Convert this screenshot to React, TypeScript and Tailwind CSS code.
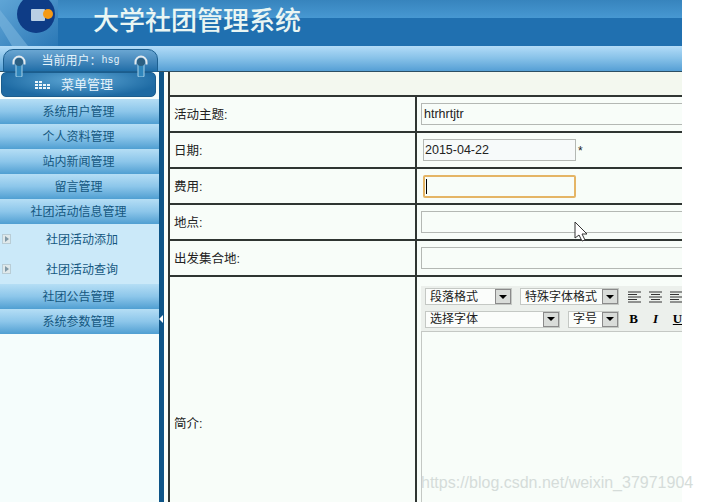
import { ReactNode } from "react";

const menu = ["系统用户管理", "个人资料管理", "站内新闻管理", "留言管理", "社团活动信息管理"];
const font = "font-['Liberation_Sans','Noto_Sans_CJK_SC',sans-serif]";

function MenuItem({ label }: { label: string }) {
  return <div className="h-[25px] flex items-center justify-center pr-[2px] pt-px text-xs text-[#14577f] bg-gradient-to-b from-[#b5def5] via-[#8cc6ea] to-[#4f9fd2]">{label}</div>;
}

function SubItem({ label }: { label: string }) {
  return (
    <div className="h-[30px] flex items-center bg-[#cbe9f9] text-xs text-[#14577f]">
      <div className="ml-[2px] w-[9px] h-[10px] bg-[#dfe8ea] border border-[#b9cdd6] flex items-center justify-center">
        <div className="w-0 h-0 border-y-[3px] border-y-transparent border-l-[4px] border-l-[#7f98a6]" />
      </div>
      <span className="ml-[35px] pt-[2px]">{label}</span>
    </div>
  );
}

function Row({ label, h, children }: { label: string; h: string; children?: ReactNode }) {
  return (
    <div className={`flex border-b-2 border-[#2f3532] ${h}`}>
      <div className="w-[247px] shrink-0 flex items-center pl-[4px] pt-[2px] text-[12.5px] text-[#222] border-r-2 border-[#2f3532]">{label}</div>
      <div className="flex-1 flex items-center pl-[4px] min-w-0">{children}</div>
    </div>
  );
}

function Select({ w, label, arrow }: { w: string; label: string; arrow: string }) {
  return (
    <div className={`${w} h-[17px] border border-[#c4c8c4] bg-[#fbfdfb] flex items-center pl-[4px] text-xs text-[#222] relative shrink-0`}>
      {label}
      <div className={`absolute top-0 ${arrow} w-[16px] h-[15px] bg-[#d9dcd9] border border-[#8a8a8a] flex items-center justify-center`}>
        <div className="w-0 h-0 border-x-[4px] border-x-transparent border-t-[4px] border-t-black" />
      </div>
    </div>
  );
}

function Lines({ center }: { center?: boolean }) {
  return (
    <svg width="15" height="13" viewBox="0 0 15 13" className="shrink-0" stroke="#333" strokeWidth="1">
      <path d={center ? "M1 2h13M3 4.500h9M1 7h13M3 9.500h9M1 12h13" : "M1 2h13M1 4.500h9M1 7h13M1 9.500h9M1 12h13"} />
    </svg>
  );
}

function Knob() {
  return (
    <svg width="14" height="22" viewBox="0 0 14 22">
      <path d="M4 9h6v12a1 1 0 0 1-1 1H5a1 1 0 0 1-1-1z" fill="#2f86bc" stroke="#a9d2e8" strokeWidth="1" />
      <circle cx="7" cy="7" r="4" fill="#2c5f82" />
      <path d="M1.500 9.500V7a5.500 5.500 0 0 1 11 0v2.500" fill="none" stroke="#e4eaee" strokeWidth="2" />
    </svg>
  );
}

export default function App() {
  return (
    <div className={`w-[701px] h-[502px] bg-white overflow-hidden relative ${font}`}>
      <div className="w-[682px] h-[502px] overflow-hidden relative">
        <header className="h-[46px] flex flex-col relative">
          <div className="h-[18px] bg-gradient-to-b from-[#3784bd] to-[#4798d2]" />
          <div className="h-[28px] bg-[#2070b0]" />
          <div className="absolute inset-0 flex items-start">
            <div className="w-[58px] h-[46px] relative overflow-hidden bg-gradient-to-br from-[#5fa5d6] to-[#2a78b6] shrink-0">
              <svg width="58" height="46" viewBox="0 0 58 46">
                <path d="M0 10L28 46H12L0 26z" fill="#7cb5dd" opacity="0.6" />
                <circle cx="36" cy="14" r="19" fill="#0e3c86" />
                <rect x="31" y="9" width="14" height="12" rx="1" fill="#b9cfe4" />
                <circle cx="48" cy="14" r="5" fill="#f59a16" />
              </svg>
            </div>
            <h1 className="ml-[35px] mt-[6px] text-[26px] leading-[30px] font-medium text-[#eaf6f3]">大学社团管理系统</h1>
          </div>
        </header>

        <div className="h-[26px] bg-gradient-to-b from-[#b3dcf8] via-[#86c1e8] to-[#559fd5] border-b border-[#2c4f63] relative pl-[3px] pt-[3px]">
          <div className="w-[155px] h-[23px] rounded-t-[10px] border border-[#1c5f90] bg-gradient-to-b from-[#6aa6d2] to-[#1f6ea8] flex items-center justify-center text-xs text-[#e4f2fa]">
            当前用户：<span className="font-['Liberation_Mono',monospace] text-[10px]">hsg</span>
          </div>
        </div>

        <div className="flex h-[430px]">
          <aside className="w-[159px] shrink-0 bg-[#f5fdfc] relative">
            <div className="h-[25px] ml-px mr-[3px] rounded-[5px] bg-[radial-gradient(ellipse_at_50%_30%,#5fa8d6,#1d6aa3_75%)] border border-[#1b5d8d] flex items-center pl-[33px] gap-[10px] text-[13px] pt-px text-[#e6f3fb]">
              <svg width="16" height="10" viewBox="0 0 16 10" fill="#eef6fa">
                <path d="M0 1h3v2H0zM4 1h3v2H4zM0 4h3v2H0zM4 4h3v2H4zM8 4h3v2H8zM12 4h3v2h-3zM0 7h3v2H0zM4 7h3v2H4zM8 7h3v2H8zM12 7h3v2h-3z" />
              </svg>
              菜单管理
            </div>
            <div className="h-[2px]" />
            {menu.map((m) => <MenuItem key={m} label={m} />)}
            <SubItem label="社团活动添加" />
            <SubItem label="社团活动查询" />
            <MenuItem label="社团公告管理" />
            <MenuItem label="系统参数管理" />
          </aside>
          <div className="w-[5px] shrink-0 bg-[#0d5487] relative">
            <div className="absolute top-[243px] left-0 w-0 h-0 border-y-[4px] border-y-transparent border-r-[4px] border-r-white" />
          </div>
          <main className="flex-1 min-w-0 pl-[4px] bg-[#f8fdf9] overflow-hidden">
            <div className="w-[600px] h-[560px] border-l-2 border-[#2f3532]">
              <div className="h-[25px] bg-[#f3f8ef] border-b-2 border-[#2f3532]" />
              <Row label="活动主题:" h="h-[36px]">
                <div className="w-[400px] h-[22px] border border-[#b4b8b4] flex items-center pl-[2px] text-[12.5px] text-[#222]">htrhrtjtr</div>
              </Row>
              <Row label="日期:" h="h-[36px]">
                <div className="ml-[2px] w-[153px] h-[22px] border border-[#b4b8b4] bg-[#f7fafa] flex items-center pl-[1px] text-[12.5px] text-[#222]">2015-04-22</div>
                <span className="ml-[2px] text-xs text-[#222] mt-[2px]">*</span>
              </Row>
              <Row label="费用:" h="h-[36px]">
                <div className="ml-[2px] w-[153px] h-[23px] rounded-[2px] border-2 border-[#e5b566] flex items-center pl-[1px]">
                  <div className="w-px h-[15px] bg-black" />
                </div>
              </Row>
              <Row label="地点:" h="h-[36px]">
                <div className="w-[400px] h-[22px] border border-[#b4b8b4]" />
              </Row>
              <Row label="出发集合地:" h="h-[36px]">
                <div className="w-[400px] h-[22px] border border-[#b4b8b4]" />
              </Row>
              <div className="flex h-[296px]">
                <div className="w-[247px] shrink-0 flex items-center pl-[4px] pb-[2px] text-[12.5px] text-[#222] border-r-2 border-[#2f3532]">简介:</div>
                <div className="pl-[4px] pt-[9px] flex-1 min-w-0 overflow-hidden">
                  <div className="w-[400px] bg-[#ecf0ec] flex flex-col gap-[5px] pl-[4px] pt-[2px] h-[46px]">
                    <div className="flex items-center">
                      <Select w="w-[87px]" label="段落格式" arrow="right-0" />
                      <div className="w-[8px]" />
                      <Select w="w-[99px]" label="特殊字体格式" arrow="right-0" />
                      <div className="flex gap-[6px] ml-[8px]">
                        <Lines />
                        <Lines center />
                        <Lines />
                      </div>
                    </div>
                    <div className="flex items-center">
                      <Select w="w-[135px]" label="选择字体" arrow="right-0" />
                      <div className="w-[8px]" />
                      <Select w="w-[51px]" label="字号" arrow="right-0" />
                      <div className="flex ml-[5px] gap-[3px] text-[13px]">
                        <span className="w-[19px] h-[18px] flex items-center justify-center font-bold font-['Liberation_Serif',serif]">B</span>
                        <span className="w-[19px] h-[18px] flex items-center justify-center font-bold italic font-['Liberation_Serif',serif]">I</span>
                        <span className="w-[19px] h-[18px] flex items-center justify-center font-bold underline font-['Liberation_Serif',serif]">U</span>
                      </div>
                    </div>
                  </div>
                  <div className="w-[400px] h-[220px] border border-[#c4c8c4] -mt-[1px] bg-[#f8fdf9]" />
                </div>
              </div>
            </div>
          </main>
        </div>

        <div className="absolute left-[12px] top-[55px]"><Knob /></div>
        <div className="absolute left-[134px] top-[55px]"><Knob /></div>

        <svg className="absolute left-[574px] top-[221px]" width="14" height="22" viewBox="0 0 14 22">
          <path d="M1 1v16l4-3 3 6 3-1-3-6h5z" fill="#fff" stroke="#333" strokeWidth="1" />
        </svg>
      </div>
      <div className="absolute left-[421px] top-[473px] text-[16px] leading-[20px] text-[#d5dcd9] font-['Liberation_Sans',sans-serif]">https://blog.csdn.net/weixin_37971904</div>
    </div>
  );
}
